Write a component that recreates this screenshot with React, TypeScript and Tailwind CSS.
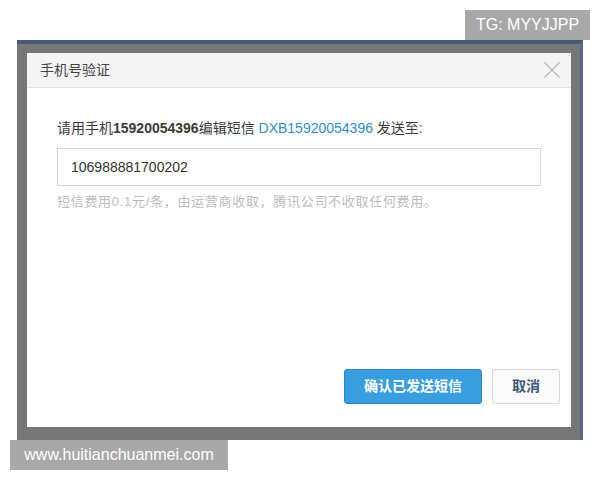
import React from 'react';

const font = { fontFamily: '"Liberation Sans", "Noto Sans CJK SC", sans-serif' };

export default function App() {
  return (
    <div className="relative w-[600px] h-[480px] bg-white overflow-hidden" style={font}>
      {/* dimmed page behind the dialog */}
      <div className="ml-[17px] mt-[40px] w-[566px] h-[400px] bg-[#777777] border-t-[4px] border-t-[#4a5877] border-r-[3px] border-r-[#5a6a86] pt-[9px] pl-[10px]">
        {/* dialog */}
        <div className="w-[544px] h-[374px] bg-white flex flex-col">
          <div className="h-[35px] bg-[#f4f4f4] border-b border-[#e3e3e3] flex items-center justify-between pl-[13px] pr-[10px]">
            <span className="text-[14px] text-[#444]">手机号验证</span>
            <svg width="18" height="18" viewBox="0 0 18 18" className="text-[#b4b4b4]">
              <path d="M1.5 1.5L16.5 16.5M16.5 1.5L1.5 16.5" stroke="currentColor" strokeWidth="1.2" fill="none" />
            </svg>
          </div>

          <div className="flex-1 flex flex-col px-[30px] pt-[30px]">
            <p className="text-[14px] leading-[20px] text-[#3a3a3a]">
              请用手机<span className="font-bold">15920054396</span>编辑短信{' '}
              <span className="text-[#2f8dc6]">DXB15920054396</span> 发送至:
            </p>
            <div className="mt-[10px] h-[38px] w-[484px] border border-[#d4d4d4] flex items-center px-[13px] text-[14px] text-[#333]">
              106988881700202
            </div>
            <p className="mt-[8px] text-[13px] leading-[16px] tracking-[0.7px] text-[#bcbcbc]">
              短信费用0.1元/条，由运营商收取，腾讯公司不收取任何费用。
            </p>
          </div>

          <div className="flex justify-end gap-[10px] pr-[11px] pb-[23px]">
            <button className="w-[138px] h-[35px] rounded-[3px] bg-[#399ee0] border border-[#2b86c4] text-white text-[14px] font-bold">
              确认已发送短信
            </button>
            <button className="w-[68px] h-[35px] rounded-[3px] bg-[#fbfbfb] border border-[#d6d6d6] text-[#3d5a78] text-[14px] font-bold">
              取消
            </button>
          </div>
        </div>
      </div>

      {/* watermarks */}
      <div className="absolute left-[465px] top-[10px] w-[125px] h-[30px] bg-[#a8a8a8] text-white text-[16px] flex items-center justify-center">
        TG: MYYJJPP
      </div>
      <div className="absolute left-[10px] top-[440px] w-[218px] h-[30px] bg-[#a8a8a8] text-white text-[16px] flex items-center justify-center">
        www.huitianchuanmei.com
      </div>
    </div>
  );
}
